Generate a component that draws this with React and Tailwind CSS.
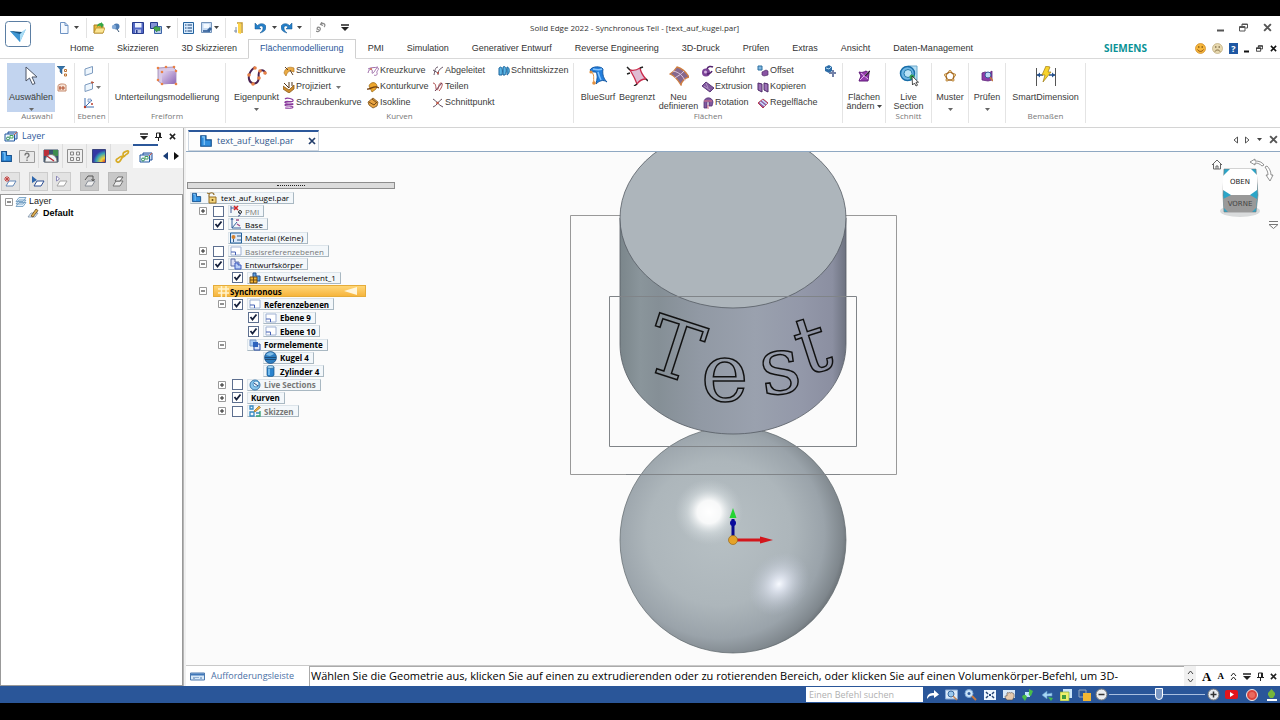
import { useState } from 'react';

const GREY = '#8a8f98';

function Svg({ w = 12, h = 12, vb, children }) {
  return (
    <svg width={w} height={h} viewBox={vb || `0 0 ${w} ${h}`} fill="none" className="shrink-0" aria-hidden="true">
      {children}
    </svg>
  );
}

const Caret = ({ color = '#444' }) => (
  <Svg w={5} h={3}>
    <path d="M0 0h5L2.500 3z" fill={color} />
  </Svg>
);

const Plane = ({ stroke = '#7d9bbf', fill = '#eef6fd', children }) => (
  <Svg>
    <path d="M2 4 9.500 1.500V8L2 10.500z" fill={fill} stroke={stroke} />
    {children}
  </Svg>
);

const LayerPlane = ({ stroke, fill = '#fff', children }) => (
  <Svg w={13} h={13}>
    <path d="m2 11 3-5h7l-3 5z" fill={fill} stroke={stroke} />
    {children}
  </Svg>
);

const Close = ({ size = 7, color = '#222' }) => (
  <Svg w={size} h={size} vb="0 0 8 8">
    <path d="M1 1l6 6M7 1 1 7" stroke={color} strokeWidth="1.700" />
  </Svg>
);

const Restore = ({ size = 8, color = '#333' }) => (
  <Svg w={size} h={size} vb="0 0 9 9">
    <path d="M3 3V1h5.500v4H6.500M.5 3.500h5.500v4.500H.5zM.5 4.500h5.500M3 1.500h5.500" stroke={color} />
  </Svg>
);

const Minus = ({ size = 7, color = '#333' }) => (
  <Svg w={size} h={8}>
    <path d={`M0 6.500h${size}`} stroke={color} strokeWidth="2" />
  </Svg>
);

const MenuDown = () => (
  <Svg w={8} h={7}>
    <path d="M0 1h8" stroke="#222" strokeWidth="1.500" />
    <path d="M0 3h8L4 7z" fill="#222" />
  </Svg>
);

const Pin = () => (
  <Svg w={7} h={9}>
    <path d="M1.500 5V1h4v4M4.500 1v4M0 5.500h7M3.500 6v3" stroke="#222" />
  </Svg>
);

const Layers = ({ size = 14 }) => (
  <Svg w={size} h={12} vb="0 0 14 12">
    <path d="M4 2h9v7H4z" fill="#cfe0f5" stroke="#1f4f9a" />
    <path d="M1 4h9.500v7H1z" fill="#eef6ff" stroke="#23599f" />
    <circle cx="4" cy="8.500" r="1.500" stroke="#2b8a55" />
    <path d="M6 5.500h3v2.500H6z" fill="#fff" stroke="#47a05a" />
    <path d="m10 5 3-3" stroke="#d05a44" />
  </Svg>
);

const Part = ({ size = 12 }) => (
  <Svg w={size} h={size} vb="0 0 12 12">
    <path d="M1.500 1.500H6V5h4.500v5.500h-9z" fill="#2f8ede" stroke="#17528f" />
    <path d="M2.500 2.500h2v7" stroke="#8cc9f7" />
  </Svg>
);

const RefPlane = () => (
  <Svg w={12} h={10}>
    <path d="M1 1h10v8H1z" fill="#fff" stroke="#9fb1d2" />
    <path d="M1 6h4.500v3" stroke="#4560b4" />
  </Svg>
);

const ICONS = {
  logo: (
    <Svg w={26} h={26}>
      <rect x=".5" y=".5" width="25" height="25" rx="3" fill="#fff" stroke="#5b7ea3" />
      <path d="m5 10 10 11 6-13-5 4z" fill="#63b7e6" />
      <path d="m5 10 10 2v9z" fill="#3f95d1" />
      <path d="m15 12 6-4-6 13z" fill="#a9dcf5" />
      <path d="m5 10 10 3 2-2z" fill="#17527f" />
    </Svg>
  ),
  file: (
    <Svg w={10} h={12}>
      <path d="M1.500.5H6L9 3.500v8H1.500z" fill="#f4f9ff" stroke="#6d92c3" />
      <path d="M6 .5v3h3" stroke="#6d92c3" />
    </Svg>
  ),
  open: (
    <Svg>
      <path d="M1 3h4l1 1h4v7H1z" fill="#e6b93f" stroke="#a97e1f" />
      <path d="M1 11 3 6h9l-2 5z" fill="#fbe493" stroke="#b48c25" strokeWidth=".7" />
      <path d="M4 5c0-3 2-4 4-4V0l3 3-3 3V4C6 3.500 5 4 4 5z" fill="#35a644" />
    </Svg>
  ),
  pushpin: (
    <Svg w={9} h={9}>
      <circle cx="5.500" cy="3.500" r="3" fill="#4d7cb4" />
      <circle cx="3" cy="4" r="2.200" fill="#85abd7" />
      <path d="M6 6l2 3" stroke="#34506f" />
    </Svg>
  ),
  save: (
    <Svg>
      <path d="M.5.5h11v11h-11z" fill="#5268c5" stroke="#263b8d" />
      <path d="M3 1h6.500v4.500H3z" fill="#eef4ff" />
      <path d="M3 7.500h6V11H3z" fill="#b8c3e8" />
      <path d="M4 8h1.500v3H4z" fill="#263b8d" />
    </Svg>
  ),
  saveAs: (
    <Svg>
      <path d="M.5.5h7v6h-7z" fill="#8493d6" stroke="#263b8d" />
      <path d="M4.500 4.500h7v7h-7z" fill="#b9cbe8" stroke="#3d64a8" />
      <path d="m3 6 4-2v1.500h3v3H7V10z" fill="#42a84b" stroke="#1c7328" strokeWidth=".5" />
    </Svg>
  ),
  list: (
    <Svg w={11} h={12}>
      <path d="M.5.5h10v11H.5z" fill="#d8ecff" stroke="#24639f" />
      <path d="M2 3h1.500M2 6h1.500M2 9h1.500M4.500 3H9M4.500 6H9M4.500 9H9" stroke="#173f72" />
    </Svg>
  ),
  snapshot: (
    <Svg w={11} h={11}>
      <path d="M.5.5h10v10H.5z" fill="#c8dcf3" stroke="#7594ba" />
      <path d="M2 8h7v2H2z" fill="#4c74a8" />
      <path d="M2.500 2h6v4h-6z" fill="#f3f9ff" />
      <path d="m6 8 3-3 2 2-3 3z" fill="#37659e" />
    </Svg>
  ),
  door: (
    <Svg w={10} h={12}>
      <path d="M4 1h5v10" stroke="#c69b2c" strokeWidth="1.500" />
      <path d="m5 1 3 1v10l-3-1z" fill="#ffd447" />
      <path d="M1 9h3M3 5v6" stroke="#7c8ca5" />
    </Svg>
  ),
  undo: (
    <Svg>
      <path d="M1 1v6h6L5 5c2-2 4-1 4 1s-1 3-3 5c4-1 6-3 6-6S7 0 3.500 3.500z" fill="#2580c9" stroke="#12528d" strokeWidth=".5" />
    </Svg>
  ),
  redo: (
    <Svg>
      <path d="M11 1v6H5l2-2C5 3 3 4 3 6s1 3 3 5C2 10 0 8 0 5s5-5 8.500-1.500z" fill="#2580c9" stroke="#12528d" strokeWidth=".5" />
    </Svg>
  ),
  refresh: (
    <Svg w={11} h={11}>
      <path d="M5 2c3-2 5 1 3 3M6 0 4.500 2.500 7 3.500M1 6c2-2 4 0 3 2S1 10 0 9m2-4-1 2 2 1" stroke="#8b8b8b" strokeWidth="1.200" />
    </Svg>
  ),
  smile: (
    <Svg w={11} h={11}>
      <circle cx="5.500" cy="5.500" r="5" fill="#f6b73c" stroke="#cf8620" strokeWidth=".7" />
      <circle cx="3.800" cy="4" r=".8" fill="#68400a" />
      <circle cx="7.200" cy="4" r=".8" fill="#68400a" />
      <path d="M2.500 6.500c1.500 2.500 4.500 2.500 6 0" stroke="#8b4d10" />
    </Svg>
  ),
  frown: (
    <Svg w={11} h={11}>
      <circle cx="5.500" cy="5.500" r="5" fill="#e7d8af" stroke="#bdaa7a" strokeWidth=".7" />
      <circle cx="3.800" cy="4" r=".8" fill="#68562f" />
      <circle cx="7.200" cy="4" r=".8" fill="#68562f" />
      <path d="M3 8.500c1-2 4-2 5 0" stroke="#806a3c" />
    </Svg>
  ),
  cursor: (
    <Svg w={14} h={20}>
      <path d="M2 1v14l3.500-3 3 6.500 2.500-1-3-6.500h5z" fill="#fff" stroke="#4c5566" />
    </Svg>
  ),
  filter: (
    <Svg w={11} h={11}>
      <path d="M0 0h8L5 3.500V8L3 6V3.500z" fill="#3474ab" stroke="#24507a" strokeWidth=".5" />
      <path d="M7.500 3.500h2v2h-2zM7.500 8h2v2h-2z" fill="#fff" stroke="#bc7331" />
    </Svg>
  ),
  overlap: (
    <Svg w={10} h={9}>
      <path d="M1 2.500C3 0 8 1 9 2v6H1z" fill="#f6e3d7" stroke="#c58a6c" />
      <path d="M2 5h6M3 3v4M6 3v4" stroke="#b04c2b" />
    </Svg>
  ),
  plane: <Plane />,
  planeMenu: (
    <Plane>
      <path d="M9 0v3M8 1.500h3" stroke="#b85c45" />
    </Plane>
  ),
  axes: (
    <Svg>
      <path d="M2 1v9h9M2 10l7-7" stroke="#3d6fb0" />
      <path d="M5 2h3v3H5z" fill="#d8e9fa" stroke="#5a7bb0" strokeWidth=".6" />
      <circle cx="2" cy="10" r="1.200" fill="#b83b2d" />
      <circle cx="9" cy="7" r="1" fill="#b83b2d" />
    </Svg>
  ),
  subdivision: (
    <Svg w={22} h={22}>
      <defs>
        <linearGradient id="cube" x1="0" x2="1" y1="0" y2="1">
          <stop offset="0" stopColor="#e3d3ef" />
          <stop offset="1" stopColor="#8c67b4" />
        </linearGradient>
      </defs>
      <path d="m2 3 15-1 3 3v13l-14 1-4-3z" fill="#d9c9e6" stroke="#8c76a8" strokeWidth=".7" />
      <rect x="6" y="6" width="14" height="13" rx="3" fill="url(#cube)" />
      <g fill="#e98145">
        <circle cx="2" cy="3" r="1.300" /><circle cx="10" cy="2" r="1.300" /><circle cx="18" cy="2" r="1.300" />
        <circle cx="6" cy="7" r="1.300" /><circle cx="20" cy="6" r="1.300" /><circle cx="6" cy="19" r="1.300" />
        <circle cx="20" cy="19" r="1.300" /><circle cx="2" cy="15" r="1.300" />
      </g>
    </Svg>
  ),
  keypoint: (
    <Svg w={20} h={20}>
      <path d="M8 1C4 4 1 8 2 13s7 6 9 2-1-8 2-10 6 1 5 3" stroke="#4a2150" strokeWidth="2" />
      <g fill="#e98145">
        <circle cx="8" cy="2" r="1.800" /><circle cx="2" cy="9" r="1.800" /><circle cx="6" cy="18" r="1.800" />
        <circle cx="12" cy="12" r="1.800" /><circle cx="13" cy="5" r="1.800" /><circle cx="18" cy="7" r="1.800" />
      </g>
    </Svg>
  ),
  cutCurve: (
    <Svg>
      <path d="M1 8c1-5 5-7 10-5v4L8 6c-3 0-4 2-5 5z" fill="#eaaa43" stroke="#b17a29" strokeWidth=".7" />
      <path d="m2 2 3 3M7 5l3 5" stroke="#5d4029" />
    </Svg>
  ),
  project: (
    <Svg>
      <path d="m0 5 6 4 5-5v4l-5 4-6-4z" fill="#cf8e2e" stroke="#8a5a1c" strokeWidth=".8" />
      <path d="m1 2 5 5V1M9 1v4" stroke="#513417" />
    </Svg>
  ),
  helix: (
    <Svg>
      <path d="M2 2c2-2 9 0 8 2s-7-1-8 1 8 0 8 2-8-1-8 1 8 0 8 2-6 1-8 1" stroke="#8a3b9d" strokeWidth="1.200" />
    </Svg>
  ),
  cross: (
    <Svg>
      <path d="M1 8c1-4 3-5 4-3S4 9 6 8s3-6 5-5-2 3-1 5-2 3-3 2M1 4c3-2 7-1 10-2" stroke="#9f6eaa" />
      <circle cx="4" cy="4" r="1" fill="#d06c49" />
    </Svg>
  ),
  contour: (
    <Svg>
      <path d="M2 5c1-4 7-5 8 0l-1 3-4 3z" fill="#eda62c" stroke="#a1701d" strokeWidth=".8" />
      <path d="M0 8c4 1 7-5 12-1" stroke="#6f3d0e" strokeWidth="1.300" />
    </Svg>
  ),
  isocline: (
    <Svg>
      <path d="m1 5 5-4 5 4-1 4-4 2-4-3z" fill="#e9a442" stroke="#79501e" strokeWidth=".8" />
      <path d="m2 5 5 3 3-3M5 2l5 4" stroke="#764a13" />
    </Svg>
  ),
  derived: (
    <Svg>
      <path d="M2 10c1-4 1-8 4-8M6 10c0-5 2-6 5-8M1 5l5 3" stroke="#695768" />
      <circle cx="6" cy="8" r="1" fill="#c04d3b" />
    </Svg>
  ),
  split: (
    <Svg>
      <path d="M1 2c4 0 2 7 4 7s1-7 4-7 0 6-2 8" stroke="#ad4c4c" />
      <path d="m3 10 7-8" stroke="#6b3b55" />
    </Svg>
  ),
  intersect: (
    <Svg>
      <path d="M1 2c4 2 5 6 10 8M1 10c4-1 5-6 9-8" stroke="#66515f" />
      <circle cx="5.500" cy="6" r="1.300" fill="#c25746" />
    </Svg>
  ),
  sketches: (
    <Svg>
      <path d="M1 3c3-3 4 2 3 7H1zM5 2c4-2 4 5 2 8H5zM9 2c3 0 3 7 0 8z" fill="#5ab5e5" stroke="#1c659c" />
    </Svg>
  ),
  bluesurf: (
    <Svg w={20} h={20}>
      <path d="M2 4c2-4 11-4 13-1-1 6 1 10 4 13-4-3-8-1-11 2 1-5 2-8 0-12-3 0-5 0-6-2z" fill="#237edc" stroke="#1459a4" />
      <path d="M5 3c4 1 7 1 9 0M10 6c1 4 2 6 3 8" stroke="#85c5ff" strokeWidth="1.500" />
      <path d="M3 6c4 2 2 6 3 11" stroke="#e2903e" />
      <circle cx="3" cy="6" r="1.600" fill="#e2903e" /><circle cx="6" cy="17" r="1.800" fill="#e2903e" />
    </Svg>
  ),
  bounded: (
    <Svg w={22} h={20}>
      <path d="M4 4c4 1 7 0 10-2 1 5 3 8 6 11-4 0-7 2-9 5-2-6-4-9-7-14z" fill="#dfbcd3" stroke="#c92b4b" strokeWidth="1.300" />
      <path d="m1 1 3 3M17 1l-3 1M22 15l-2-2M8 20l3-2M1 8l3-1" stroke="#222" strokeWidth="1.500" />
    </Svg>
  ),
  redefine: (
    <Svg w={20} h={20}>
      <path d="M1 8c3-2 5-4 7-7 4 1 9 5 12 10-4 1-7 4-8 8C9 14 6 10 1 8z" fill="#86688e" stroke="#cf7e41" strokeWidth="1.300" />
      <path d="M4 5c6 1 10 5 12 10M6 12c2-2 6-3 9-7" stroke="#dac6df" />
    </Svg>
  ),
  guided: (
    <Svg>
      <circle cx="4" cy="7.500" r="4" fill="#7a4296" />
      <circle cx="3.500" cy="7" r="1.500" fill="#d3b0df" />
      <path d="M5 4c1-3 4-3 6-2M5 9c3 0 4-1 5-3" stroke="#53236e" strokeWidth="1.500" />
    </Svg>
  ),
  extrude: (
    <Svg>
      <path d="m0 5 4-4 8 6-4 4z" fill="#81599e" stroke="#5d3a79" />
      <path d="m2 5 6 4M4 2l2 5" stroke="#c5a9d5" strokeWidth=".7" />
    </Svg>
  ),
  rotate: (
    <Svg>
      <path d="M2 11V5c0-5 8-6 9 0l-1 4H7V5c-1-1-2 0-2 1v5z" fill="#81599e" stroke="#553174" strokeWidth=".8" />
      <path d="M2 4h8M6 8v4" stroke="#d87083" />
    </Svg>
  ),
  offset: (
    <Svg>
      <path d="M1 1h4v4H1z" fill="#82b9e1" stroke="#2c6f9f" />
      <path d="m5 7 4-2 2 1v4l-4 1-2-1z" fill="#8953a3" stroke="#502c67" strokeWidth=".7" />
    </Svg>
  ),
  copy: (
    <Svg>
      <path d="m1 2 4 1v8L1 9zM7 2l4 1v8L7 9z" fill="#9b70b5" stroke="#4c2868" />
    </Svg>
  ),
  ruled: (
    <Svg>
      <path d="m1 6 5-4 5 4-5 5z" fill="#8e5da7" stroke="#b9394d" />
      <path d="m3 5 5 4M5 3l5 4" stroke="#cce1fb" strokeWidth="1.500" />
    </Svg>
  ),
  combine: (
    <Svg>
      <path d="m1 2 4-2 3 2v4L5 8 1 6z" fill="#2c6ca7" />
      <path d="M8 5h2v2h2v2h-2v3H8V9H5V7h3z" fill="#7180a7" />
      <path d="m2 3 3 1 2-2" stroke="#b0d8f1" />
    </Svg>
  ),
  modify: (
    <Svg>
      <path d="M1 2c3 1 5 0 7-1l3 2-1 8H1l2-5z" fill="#963baf" stroke="#5f1a78" />
      <path d="m2 10 9-9M3 3l7 6" stroke="#e0b4ec" />
      <path d="m7 6 5-5" stroke="#2c2330" strokeWidth="1.500" />
    </Svg>
  ),
  live: (
    <Svg w={20} h={22}>
      <path d="M9 1h9v14H9z" fill="#b4ddf3" stroke="#6aa9cc" />
      <circle cx="8.500" cy="8.500" r="7" fill="#6fb7e5" stroke="#176da8" strokeWidth="1.500" />
      <circle cx="9" cy="8.500" r="4" fill="#b9e3f7" stroke="#237bad" />
      <circle cx="13" cy="12" r="2.500" fill="#34a354" />
      <path d="m13 11 .5 9 2-2 1.500 3 1.500-.8-1.500-3h2.500z" fill="#fff" stroke="#222" strokeWidth=".8" />
    </Svg>
  ),
  pattern: (
    <Svg>
      <path d="m6 1.500 4.500 3.300-1.700 5.200H3.200L1.500 4.800z" stroke="#a36721" strokeWidth="1.500" />
      <g fill="#f3d48d" stroke="#a36721" strokeWidth=".6">
        <circle cx="6" cy="1.500" r="1.200" /><circle cx="10.500" cy="5" r="1.200" /><circle cx="9" cy="10" r="1.200" />
        <circle cx="3" cy="10" r="1.200" /><circle cx="1.500" cy="5" r="1.200" />
      </g>
    </Svg>
  ),
  inspect: (
    <Svg>
      <path d="m1 3 3-1 4 1 3-2v9L7 11l-6-1z" fill="#8c3ba8" stroke="#5e267a" strokeWidth=".8" />
      <circle cx="7" cy="5" r="3" fill="#bfd8f5" stroke="#365a9b" />
      <path d="m9 7 3 4" stroke="#c6783e" strokeWidth="1.500" />
    </Svg>
  ),
  dimension: (
    <Svg w={22} h={20}>
      <path d="M1.500 2v18M20.500 2v18" stroke="#555" />
      <path d="M2 9h6M14 9h6" stroke="#26518d" strokeWidth="1.300" />
      <path d="m2 9 3-2.500v5zM20 9l-3-2.500v5z" fill="#26518d" />
      <path d="m11 0 4 1-2 5h3l-8 10 2-7H7z" fill="#f8d32c" stroke="#9c7b15" strokeWidth=".7" />
    </Svg>
  ),
  help: (
    <Svg w={16} h={14}>
      <path d="M.5 1.500H6l1 1h8.500v11H.5z" fill="#e9e9e9" stroke="#9b9b9b" />
      <path d="M6 6.500c0-3 4-3 4 0 0 1.500-2 1-2 3M8 10.500V12" stroke="#777" strokeWidth="1.300" />
    </Svg>
  ),
  gauge: (
    <Svg w={16} h={14}>
      <path d="M1 1h14v12H1z" fill="#395574" stroke="#344b64" />
      <path d="M1 1h5v6H1z" fill="#b92e3a" /><path d="M10 1h5v6h-5z" fill="#3e8c50" />
      <path d="M2 13C2 3 14 3 14 13z" fill="#f1f4f7" stroke="#777" />
      <path d="m4 7 7 5" stroke="#b92e3a" strokeWidth="1.500" />
    </Svg>
  ),
  grid4: (
    <Svg w={16} h={14}>
      <path d="M.5.5h15v13H.5z" fill="#f0f0f0" stroke="#8e8e8e" />
      <path d="M3.500 3h3v3h-3zM9.500 3h3v3h-3zM3.500 8.500h3v3h-3zM9.500 8.500h3v3h-3z" stroke="#858585" />
    </Svg>
  ),
  heat: (
    <Svg w={14} h={14}>
      <defs>
        <radialGradient id="heat" cx="1" cy="1" r="1.200">
          <stop offset="0" stopColor="#d32222" /><stop offset=".3" stopColor="#f0d43a" />
          <stop offset=".6" stopColor="#36a2b5" /><stop offset=".8" stopColor="#3538a5" />
        </radialGradient>
      </defs>
      <path d="M.5.5h13v13H.5z" fill="url(#heat)" stroke="#39437e" />
    </Svg>
  ),
  link: (
    <Svg w={15} h={15}>
      <path d="M8 8c-2-2-4 1-6 2s0 4 2 3 2-4 4-5 2-2 4-3 2-4 0-3-4 1-4 3 1 3 2 2" stroke="#d7ab25" strokeWidth="1.700" />
    </Svg>
  ),
  arrowBlue: <Svg w={5} h={8}><path d="M5 0v8L0 4z" fill="#1a3d77" /></Svg>,
  arrowBlack: <Svg w={5} h={8}><path d="M0 0v8l5-4z" fill="#111" /></Svg>,
  layerNew: (
    <LayerPlane stroke="#6488b7">
      <path d="m1 2 4 4M5 2 1 6M3 1v6M0 4h6" stroke="#c44442" />
    </LayerPlane>
  ),
  layerShow: (
    <LayerPlane stroke="#2d4f93">
      <path d="M0 1v7l5-3z" fill="#2e66ac" />
    </LayerPlane>
  ),
  layerHide: (
    <LayerPlane stroke="#a5a5a5">
      <path d="M1.500 1v5l3-2z" fill="#fff" stroke="#8d8ab8" />
    </LayerPlane>
  ),
  layerMove: (
    <LayerPlane stroke={GREY} fill="#eee">
      <path d="m2 5 3-4h5v4M8.500 4l1.500 2 1.500-2" stroke="#555" />
    </LayerPlane>
  ),
  layerDelete: (
    <LayerPlane stroke="#777" fill="#eee">
      <path d="m4 6 3-4h5l-3 4z" fill="#fff" stroke="#666" />
    </LayerPlane>
  ),
  layerStack: (
    <Svg>
      <path d="m1 8 3-4h7L8 8zM1 10.500l3-4h7l-3 4zM1 5.500l3-4h7l-3 4z" fill="#e4f1fb" stroke="#6696bd" strokeWidth=".8" />
    </Svg>
  ),
  layerEdit: (
    <Svg>
      <path d="m1 9 3-4h7l-3 4z" fill="#e4f1fb" stroke="#7e8fa5" strokeWidth=".8" />
      <path d="m4 8 5-7 2 1.500L6 9z" fill="#e1b052" stroke="#604419" strokeWidth=".8" />
    </Svg>
  ),
  lock: (
    <Svg w={11} h={12}>
      <path d="M3 5V3c0-3 5-3 5 0M1 1l3 1" stroke="#967332" strokeWidth="1.200" />
      <path d="M3 5h7v6H3z" fill="#f4d57c" stroke="#936c25" />
      <circle cx="6.500" cy="8" r="1" fill="#694b15" />
    </Svg>
  ),
  pmi: (
    <Svg>
      <path d="M1 1v7M1 3h4M8 7c3 0 3 4 0 4" stroke="#3e5a96" />
      <path d="m4 1 4 4M8 1 4 5" stroke="#d32626" strokeWidth="1.600" />
      <circle cx="10" cy="7" r="1.500" stroke="#333" />
    </Svg>
  ),
  base: (
    <Svg>
      <path d="M2 1v9h9M2 10l5-6M1 2l1-2 1 2" stroke="#36639f" />
      <path d="M6 2h3M7 6l3 2" stroke="#a14f88" strokeWidth="1.300" />
    </Svg>
  ),
  material: (
    <Svg>
      <path d="M.5 1h11v10H.5z" fill="#dceafb" stroke="#22609b" />
      <circle cx="3.500" cy="5" r="2" fill="#d48232" />
      <path d="M3.500 7v3M7 4h4M7 8h4" stroke="#355b82" />
    </Svg>
  ),
  refplane: <RefPlane />,
  body: (
    <Svg>
      <path d="M1 1h4v3h4v4H1z" fill="#dcdff5" stroke="#5c6ea8" />
      <path d="M5 5h3v2h3v4H5z" fill="#b8cef6" stroke="#3d5bc0" />
    </Svg>
  ),
  element: (
    <Svg>
      <path d="M4 1h3v3h4v5H4z" fill="#5c9fdf" stroke="#244f89" />
      <path d="M1 5h7v6H1z" fill="#f2b635" stroke="#704b13" />
      <path d="M4.500 5v6M1 8h7" stroke="#704b13" />
    </Svg>
  ),
  features: (
    <Svg>
      <path d="M1 1h6v6H1z" fill="#a9cbf5" stroke="#7d9bc8" />
      <path d="M5 5h6v6H5z" fill="#dbe6fb" stroke="#2648a4" />
      <path d="M4 3h5v5H4z" fill="#2e62bd" />
    </Svg>
  ),
  ball: (
    <Svg w={13} h={13}>
      <circle cx="6.500" cy="6.500" r="6" fill="#2c7dc0" stroke="#174c82" strokeWidth=".7" />
      <path d="M2 4c2-4 7-3 8-1L6 5z" fill="#7fbde9" />
      <path d="M1 6.500h11M1 8.500h11" stroke="#1b4169" strokeWidth=".8" />
    </Svg>
  ),
  cylinder: (
    <Svg>
      <path d="M2 2v8c0 2 7 2 7 0V2z" fill="#2983ce" stroke="#165386" strokeWidth=".7" />
      <path d="M4 3v7" stroke="#8bcdf6" strokeWidth="1.500" />
      <ellipse cx="5.500" cy="2" rx="3.500" ry="1.500" fill="#a8d8f5" stroke="#165386" strokeWidth=".6" />
    </Svg>
  ),
  liveSmall: (
    <Svg>
      <circle cx="6" cy="6" r="5" fill="#8cc6ec" stroke="#3c79ab" />
      <circle cx="7" cy="5" r="3" fill="#e1f2fc" stroke="#4e97ca" />
      <path d="m5 4 4 3" stroke="#347" />
    </Svg>
  ),
  skizzen: (
    <Svg>
      <path d="M1 1h3v3H1zM1 7h4v4H1zM7 8h4" stroke="#3588c0" strokeWidth="1.300" />
      <path d="m5 6 5-5 1.500 1.500L6 7z" fill="#efb23c" stroke="#8a5b18" strokeWidth=".6" />
      <path d="M7 11h4V6" stroke="#30a070" strokeWidth="1.300" />
    </Svg>
  ),
  promptBar: (
    <Svg w={15} h={9}>
      <path d="M.5 1h14v7H.5z" fill="#d7e8f8" stroke="#4c79ae" />
      <path d="M1 2.500h13" stroke="#3f77b9" strokeWidth="2" />
      <path d="M3 6h2m1-1v1m2-1v1m2 0h2" stroke="#4c79ae" />
    </Svg>
  ),
  go: <Svg><path d="M0 10c0-5 3-6 7-6V1l5 4.500L7 9V6.500C4 6 2 7 0 10z" fill="#fff" /></Svg>,
  zoomArea: (
    <Svg w={13} h={12}>
      <path d="M.5 1h12v9H.5z" fill="#dceaf8" stroke="#87a9d5" />
      <circle cx="6" cy="5" r="3" fill="#9bc8ed" stroke="#39689e" /><path d="m8 7 4 4" stroke="#c78653" strokeWidth="1.500" />
    </Svg>
  ),
  zoom: (
    <Svg w={13} h={12}>
      <circle cx="5" cy="4.500" r="4" fill="#cde5f8" stroke="#7ba6d7" /><circle cx="5" cy="4.500" r="1.500" fill="#315e9f" />
      <path d="m8 7 4 4" stroke="#c97b42" strokeWidth="2" />
    </Svg>
  ),
  fit: (
    <Svg>
      <path d="M0 1h12v10H0z" fill="#eef6ff" />
      <path d="m2 3 2 2M10 3 8 5M2 9l2-2M10 9 8 7" stroke="#234476" strokeWidth="1.500" /><path d="M5 5h2v2H5z" fill="#234476" />
    </Svg>
  ),
  pan: (
    <Svg>
      <path d="M0 1h12v8H0z" fill="#d9e8f8" />
      <path d="M4 11C1 8 2 6 4 7V4c1-1 1.500 0 1.500 0 1-1 2 0 2 0 1-1 2 0 2 0 1 0 2 1 1.500 4l-1.500 3z" fill="#e5c9ae" stroke="#4d4848" strokeWidth=".6" />
    </Svg>
  ),
  orbit: (
    <Svg>
      <path d="M3 3h5v5H3z" fill="#bfe5ff" /><path d="M0 8c1-3 4-3 5 0l-2 4zM7 0l4 2-2 5c-2 0-3-2-2-3z" fill="#48bd49" />
    </Svg>
  ),
  lookAt: (
    <Svg>
      <path d="m1 6 5-4v3l5-1v3H6v3z" fill="#a7d6f5" stroke="#5b94c8" strokeWidth=".6" /><path d="m7 8 5 1-2 3z" fill="#42bb4b" />
    </Svg>
  ),
  views: (
    <Svg>
      <path d="M3 0h9v9H3z" fill="#cde6f9" /><path d="M0 3h9v9H0z" fill="#eef06d" stroke="#80a83a" strokeWidth=".7" />
      <path d="M2 6h4v4H2z" fill="#3f9d3e" />
    </Svg>
  ),
  style: (
    <Svg w={13} h={12}>
      <path d="M1 1h7v7H1z" stroke="#95a7bc" /><path d="M5 4h8v8H5z" fill="#f2b632" />
    </Svg>
  ),
  minusRound: (
    <Svg w={13} h={13}>
      <circle cx="6.500" cy="6.500" r="5.500" fill="#e9ecef" stroke="#777" /><path d="M3.500 6.500h6" stroke="#333" strokeWidth="1.500" />
    </Svg>
  ),
  plusRound: (
    <Svg w={13} h={13}>
      <circle cx="6.500" cy="6.500" r="5.500" fill="#e9ecef" stroke="#777" /><path d="M3.500 6.500h6M6.500 3.500v6" stroke="#333" strokeWidth="1.500" />
    </Svg>
  ),
  video: (
    <Svg w={13} h={9}>
      <rect width="13" height="9" rx="2" fill="#e2141b" /><path d="m5 2 4 2.500L5 7z" fill="#fff" />
    </Svg>
  ),
  record: (
    <Svg>
      <circle cx="6" cy="6" r="5.500" fill="#d9433c" stroke="#eee" /><circle cx="6" cy="6" r="3" fill="#ea6a5f" />
    </Svg>
  ),
  upload: (
    <Svg w={11} h={12}>
      <path d="M1 11h10" stroke="#fff" strokeWidth="2" /><path d="M5.500 0 9 4v2L7 9H4L2 6V4z" fill="#76b53b" />
    </Svg>
  ),
};

function IconButton({ icon, label, className = '' }) {
  return (
    <button type="button" aria-label={label} className={`flex shrink-0 items-center justify-center ${className}`}>
      {ICONS[icon]}
    </button>
  );
}

const Divider = () => <span className="h-5 w-px shrink-0 bg-[#e2e2e2]" />;

function QuickAccess() {
  return (
    <div className="flex w-[472px] shrink-0 items-center">
      <IconButton icon="file" label="Neu" className="w-3" />
      <span className="flex w-3 justify-center"><Caret /></span>
      <span className="w-1" />
      <Divider />
      <IconButton icon="open" label="Öffnen" className="ml-1 w-4" />
      <IconButton icon="pushpin" label="Anheften" className="ml-0.5 w-3" />
      <span className="w-1" />
      <Divider />
      <IconButton icon="save" label="Speichern" className="ml-1 w-4" />
      <IconButton icon="saveAs" label="Speichern unter" className="w-5" />
      <Caret />
      <span className="w-1.5" />
      <Divider />
      <IconButton icon="list" label="Eigenschaften" className="w-5" />
      <IconButton icon="snapshot" label="Bild" className="w-4" />
      <Caret />
      <span className="w-1.5" />
      <Divider />
      <IconButton icon="door" label="Schließen" className="ml-0.5 w-5" />
      <IconButton icon="undo" label="Rückgängig" className="w-6" />
      <Caret />
      <IconButton icon="redo" label="Wiederholen" className="w-5" />
      <Caret />
      <span className="w-2" />
      <Divider />
      <IconButton icon="refresh" label="Aktualisieren" className="w-5" />
      <span className="ml-2.5"><MenuDown /></span>
    </div>
  );
}

const TABS = [
  'Home', 'Skizzieren', '3D Skizzieren', 'Flächenmodellierung', 'PMI', 'Simulation', 'Generativer Entwurf',
  'Reverse Engineering', '3D-Druck', 'Prüfen', 'Extras', 'Ansicht', 'Daten-Management',
];

function Header() {
  const [active, setActive] = useState('Flächenmodellierung');
  return (
    <header className="flex border-b border-[#d9d9d9] bg-white">
      <div className="w-[58px] shrink-0 pl-[5px] pt-[5px]">{ICONS.logo}</div>
      <div className="min-w-0 flex-1">
        <div className="flex h-[23px] items-center">
          <QuickAccess />
          <h1 className="whitespace-nowrap text-[8px] text-[#333]">
            Solid Edge 2022 - Synchronous Teil - [text_auf_kugel.par]
          </h1>
          <div className="ml-auto flex items-center gap-[15px] pr-2">
            <button type="button" aria-label="Minimieren"><Minus color="#555" /></button>
            <button type="button" aria-label="Wiederherstellen"><Restore size={9} color="#555" /></button>
            <button type="button" aria-label="Beenden"><Close size={9} color="#555" /></button>
          </div>
        </div>
        <div className="flex h-[19px] items-end">
          <nav className="-mb-px flex font-['Liberation_Sans',sans-serif] text-[9px] text-[#333]">
            {TABS.map((tab) => (
              <button
                key={tab}
                type="button"
                onClick={() => setActive(tab)}
                className={
                  tab === active
                    ? 'h-5 whitespace-nowrap border border-b-white border-[#d0d0d0] bg-white px-[11px] text-[#2b579a]'
                    : 'h-5 whitespace-nowrap pl-3 pr-[11px]'
                }
              >
                {tab}
              </button>
            ))}
          </nav>
          <div className="ml-auto flex h-full items-center">
            <span className="mr-12 text-[10px] font-bold text-[#0a9296]">SIEMENS</span>
            <div className="flex items-center gap-[6px] pr-[3px]">
              <button type="button" aria-label="Gefällt mir">{ICONS.smile}</button>
              <button type="button" aria-label="Gefällt mir nicht">{ICONS.frown}</button>
              <button type="button" className="h-[11px] w-[9px] bg-[#1e57a3] text-[9px] font-bold leading-[11px] text-white">?</button>
              <span className="flex items-center gap-[7px]">
                <button type="button" aria-label="Fenster minimieren"><Minus size={5} color="#111" /></button>
                <button type="button" aria-label="Fenster wiederherstellen"><Restore size={7} color="#111" /></button>
                <button type="button" aria-label="Fenster schließen"><Close color="#111" /></button>
              </span>
            </div>
          </div>
        </div>
      </div>
    </header>
  );
}

function Group({ label, className, children }) {
  return (
    <section className={`flex shrink-0 flex-col border-r border-[#e4e4e4] ${className}`}>
      <div className="flex h-[49px]">{children}</div>
      <p className="h-[11px] text-center font-['Open_Sans',sans-serif] text-[8px] leading-[8px] text-[#777]">{label}</p>
    </section>
  );
}

function BigButton({ icon, lines, className, caret, inlineCaret, selected }) {
  return (
    <button
      type="button"
      className={`flex h-full shrink-0 flex-col items-center whitespace-nowrap leading-[9px] ${selected ? 'bg-[#c2d4ef]' : ''} ${className}`}
    >
      <span className="flex h-[26px] items-center">{ICONS[icon]}</span>
      <span className="mt-1">{lines[0]}</span>
      {lines[1] && (
        <span className="flex items-center gap-0.5">
          {lines[1]}
          {inlineCaret && <Caret />}
        </span>
      )}
      {caret && <span className="mt-1.5"><Caret color="#666" /></span>}
    </button>
  );
}

function SmallColumn({ items, className = '' }) {
  return (
    <div className={`flex shrink-0 flex-col ${className}`}>
      {items.map(([icon, label, menu]) => (
        <button key={icon} type="button" aria-label={label || icon} className="flex h-4 items-center gap-px whitespace-nowrap">
          {ICONS[icon]}
          {label}
          {menu && <span className={label ? 'ml-1' : ''}><Caret color="#777" /></span>}
        </button>
      ))}
    </div>
  );
}

function Ribbon() {
  return (
    <div className="flex border-b border-[#d4d4d4] bg-white pb-1 pt-1 font-['Liberation_Sans',sans-serif] text-[9px] text-[#3b3b3b]">
      <Group label="Auswahl" className="w-[75px]">
        <BigButton icon="cursor" lines={['Auswählen']} className="ml-[7px] w-12" caret selected />
        <SmallColumn className="ml-0.5" items={[['filter'], ['overlap']]} />
      </Group>
      <Group label="Ebenen" className="w-[34px]">
        <SmallColumn className="ml-2" items={[['plane'], ['planeMenu', '', true], ['axes']]} />
      </Group>
      <Group label="Freiform" className="w-[117px]">
        <BigButton icon="subdivision" lines={['Unterteilungsmodellierung']} className="w-full" />
      </Group>
      <Group label="Kurven" className="w-[348px]">
        <BigButton icon="keypoint" lines={['Eigenpunkt']} className="ml-1 w-[53px]" caret />
        <SmallColumn
          className="w-[84px]"
          items={[['cutCurve', 'Schnittkurve'], ['project', 'Projiziert', true], ['helix', 'Schraubenkurve']]}
        />
        <SmallColumn className="w-[65px]" items={[['cross', 'Kreuzkurve'], ['contour', 'Konturkurve'], ['isocline', 'Isokline']]} />
        <SmallColumn className="w-[66px]" items={[['derived', 'Abgeleitet'], ['split', 'Teilen'], ['intersect', 'Schnittpunkt']]} />
        <SmallColumn items={[['sketches', 'Schnittskizzen']]} />
      </Group>
      <Group label="Flächen" className="w-[269px]">
        <BigButton icon="bluesurf" lines={['BlueSurf']} className="ml-1 w-10" />
        <BigButton icon="bounded" lines={['Begrenzt']} className="w-[38px]" />
        <BigButton icon="redefine" lines={['Neu', 'definieren']} className="w-[45px]" />
        <SmallColumn className="ml-px w-[55px]" items={[['guided', 'Geführt'], ['extrude', 'Extrusion'], ['rotate', 'Rotation']]} />
        <SmallColumn className="w-[67px]" items={[['offset', 'Offset'], ['copy', 'Kopieren'], ['ruled', 'Regelfläche']]} />
        <SmallColumn items={[['combine']]} />
      </Group>
      <Group className="w-[43px]">
        <BigButton icon="modify" lines={['Flächen', 'ändern']} className="w-full" inlineCaret />
      </Group>
      <Group label="Schnitt" className="w-[46px]">
        <BigButton icon="live" lines={['Live', 'Section']} className="w-full" />
      </Group>
      <Group className="w-[37px]">
        <BigButton icon="pattern" lines={['Muster']} className="w-full" caret />
      </Group>
      <Group className="w-[37px]">
        <BigButton icon="inspect" lines={['Prüfen']} className="w-full" caret />
      </Group>
      <Group label="Bemaßen" className="w-[80px]">
        <BigButton icon="dimension" lines={['SmartDimension']} className="w-full" />
      </Group>
    </div>
  );
}

function Expander({ open }) {
  return (
    <Svg w={8} h={8}>
      <path d="M.5.5h7v7h-7z" fill="#fff" stroke="#999" />
      <path d={open ? 'M2 4h4' : 'M2 4h4M4 2v4'} stroke="#222" />
    </Svg>
  );
}

function LayerPanel() {
  return (
    <aside className="flex w-[184px] shrink-0 flex-col border-r border-[#b5b5b5] bg-[#f0f0f0]">
      <div className="flex h-4 items-center gap-1 bg-white pl-1 pr-[7px] text-[9px] text-[#2b579a]">
        <Layers />
        Layer
        <span className="ml-auto flex items-center gap-[7px]">
          <MenuDown />
          <Pin />
          <Close />
        </span>
      </div>
      <div className="flex h-6 items-center">
        <span className="flex w-[15px] shrink-0"><Part size={13} /></span>
        <IconButton icon="help" label="Hilfe" className="h-full w-6 border-r border-[#ddd]" />
        <IconButton icon="gauge" label="Sensoren" className="h-full w-6 border-r border-[#ddd]" />
        <IconButton icon="grid4" label="Familie" className="h-full w-6 border-r border-[#ddd]" />
        <IconButton icon="heat" label="Simulation" className="h-full w-6 border-r border-[#ddd]" />
        <IconButton icon="link" label="Verknüpfung" className="h-full w-[22px]" />
        <button type="button" aria-label="Layer" className="flex h-full w-[25px] items-center justify-center border-t-2 border-[#2b579a] bg-white">
          <Layers />
        </button>
        <div className="flex h-full flex-1 items-center justify-center gap-1.5 bg-white">
          <button type="button" aria-label="Zurück">{ICONS.arrowBlue}</button>
          <button type="button" aria-label="Weiter">{ICONS.arrowBlack}</button>
        </div>
      </div>
      <div className="flex h-[26px] items-center pl-px">
        <IconButton icon="layerNew" label="Neuer Layer" className="size-[19px] border border-[#ccc] bg-[#e3e3e3]" />
        <IconButton icon="layerShow" label="Layer einblenden" className="ml-[9px] size-[19px] border border-[#ccc] bg-[#e3e3e3]" />
        <IconButton icon="layerHide" label="Layer ausblenden" className="ml-1 size-[19px] border border-[#ccc] bg-[#e3e3e3]" />
        <IconButton icon="layerMove" label="Element verschieben" className="ml-[9px] size-[19px] border border-[#bbb] bg-[#c8c8c8]" />
        <IconButton icon="layerDelete" label="Layer löschen" className="ml-[9px] size-[19px] border border-[#bbb] bg-[#c8c8c8]" />
      </div>
      <ul className="flex-1 border border-[#999] bg-white pl-1 pt-px font-['Liberation_Sans',sans-serif] text-[9px] text-[#222]">
        <li>
          <span className="flex h-3 items-center gap-0.5">
            <Expander open />
            {ICONS.layerStack}
            Layer
          </span>
          <ul className="ml-1 pl-[18px]">
            <li className="flex h-3 items-center gap-1 font-bold text-black">
              {ICONS.layerEdit}
              Default
            </li>
          </ul>
        </li>
      </ul>
    </aside>
  );
}

const TREE = [
  { level: 1, exp: '+', check: false, icon: 'pmi', label: 'PMI', dim: true },
  { level: 1, check: true, icon: 'base', label: 'Base' },
  { level: 1, icon: 'material', label: 'Material (Keine)' },
  { level: 1, exp: '+', check: false, icon: 'refplane', label: 'Basisreferenzebenen', dim: true },
  { level: 1, exp: '-', check: true, icon: 'body', label: 'Entwurfskörper' },
  { level: 2, check: true, icon: 'element', label: 'Entwurfselement_1' },
  { level: 0, label: 'Synchronous' },
  { level: 2, exp: '-', check: true, icon: 'refplane', label: 'Referenzebenen', bold: true },
  { level: 3, check: true, icon: 'refplane', label: 'Ebene 9', bold: true },
  { level: 3, check: true, icon: 'refplane', label: 'Ebene 10', bold: true },
  { level: 2, exp: '-', icon: 'features', label: 'Formelemente', bold: true },
  { level: 3, icon: 'ball', label: 'Kugel 4', bold: true },
  { level: 3, icon: 'cylinder', label: 'Zylinder 4', bold: true },
  { level: 2, exp: '+', check: false, icon: 'liveSmall', label: 'Live Sections', bold: true, dim: true },
  { level: 2, exp: '+', check: true, label: 'Kurven', bold: true },
  { level: 2, exp: '+', check: false, icon: 'skizzen', label: 'Skizzen', bold: true, dim: true },
];

const INDENT = { 1: 'pl-[13px]', 2: 'pl-8', 3: 'pl-12' };

function TreeCheck({ label, defaultChecked }) {
  return (
    <span className="relative flex size-[11px]">
      <input
        type="checkbox"
        aria-label={label}
        defaultChecked={defaultChecked}
        className="peer size-[11px] appearance-none border border-[#5d6f8f] bg-white"
      />
      <svg viewBox="0 0 11 11" className="pointer-events-none absolute inset-0 hidden peer-checked:block" fill="none">
        <path d="m2.500 5 2 2.500 4-5" stroke="#16213d" strokeWidth="1.800" />
      </svg>
    </span>
  );
}

function TreeRow({ row }) {
  if (row.level === 0) {
    return (
      <li className="flex items-center pl-[13px]">
        <span className="w-[14px]"><Expander open /></span>
        <span className="flex h-3 w-[153px] items-center gap-px border border-[#e5ac3a] bg-gradient-to-b from-[#ffd675] to-[#f6b53c] pl-1 font-bold text-black">
          <Svg w={11} h={11}>
            <path d="M3.500 0v11M8 0v11M0 3h11M0 7h11" stroke="#fff3cd" strokeWidth="1.500" />
          </Svg>
          {row.label}
          <span className="ml-auto pr-2">
            <Svg w={13} h={8}><path d="M0 4 13 0v8z" fill="#fff6dc" /></Svg>
          </span>
        </span>
      </li>
    );
  }
  return (
    <li className={`flex items-center ${INDENT[row.level]}`}>
      <span className="w-[14px]">{row.exp && <Expander open={row.exp === '-'} />}</span>
      <span className="mr-1 w-[11px]">
        {row.check !== undefined && <TreeCheck label={row.label} defaultChecked={row.check} />}
      </span>
      <span
        className={`flex h-3 items-center gap-[3px] whitespace-nowrap border border-[#dce4ea] border-b-[#a9b8c2] border-r-[#a9b8c2] bg-[#f3f7fa] pr-1 ${row.icon ? '' : 'pl-[3px]'} ${row.bold ? 'font-bold' : ''} ${row.dim ? 'text-[#777]' : 'text-black'}`}
      >
        {row.icon && <span className="flex w-[13px] justify-center">{ICONS[row.icon]}</span>}
        {row.label}
      </span>
    </li>
  );
}

function PathFinder() {
  return (
    <div className="relative w-[209px] pt-[30px]">
      <div className="ml-px flex h-[7px] items-center justify-center border border-[#8d8d8d] bg-[#dcdcdc]">
        <span className="w-7 border-t border-dotted border-[#222]" />
      </div>
      <ul className="mt-0.5 grid h-[227px] auto-rows-fr text-[8px] leading-[11px]">
        <li className="flex items-center pl-1">
          <span className="flex h-3 items-center gap-1 border border-[#dce4ea] border-b-[#a9b8c2] border-r-[#a9b8c2] bg-[#f3f7fa] pr-1 text-black">
            <Part size={11} />
            {ICONS.lock}
            text_auf_kugel.par
          </span>
        </li>
        {TREE.map((row) => (
          <TreeRow key={row.label} row={row} />
        ))}
      </ul>
    </div>
  );
}

function Scene() {
  return (
    <svg
      viewBox="186 152 1094 513"
      preserveAspectRatio="xMidYMin meet"
      className="absolute inset-0 h-full w-full"
      role="img"
      aria-label="Zylinder und Kugel"
    >
      <defs>
        <linearGradient id="side" x1="0" x2="1" y1="0" y2="0">
          <stop offset="0" stopColor="#7b868b" />
          <stop offset=".09" stopColor="#8a959b" />
          <stop offset=".17" stopColor="#858f96" />
          <stop offset=".35" stopColor="#9199a4" />
          <stop offset=".6" stopColor="#9aa1ae" />
          <stop offset=".8" stopColor="#9398a9" />
          <stop offset=".94" stopColor="#8b8fa1" />
          <stop offset="1" stopColor="#6d7280" />
        </linearGradient>
        <radialGradient id="sphere" cx=".44" cy=".47" r=".58">
          <stop offset="0" stopColor="#b7c0c4" />
          <stop offset=".55" stopColor="#adb6bb" />
          <stop offset=".8" stopColor="#9aa3aa" />
          <stop offset=".94" stopColor="#7f878d" />
          <stop offset="1" stopColor="#656b70" />
        </radialGradient>
        <radialGradient id="glow">
          <stop offset="0" stopColor="#fff" />
          <stop offset=".35" stopColor="#fff" stopOpacity=".9" />
          <stop offset=".65" stopColor="#e6ecee" stopOpacity=".4" />
          <stop offset="1" stopColor="#cfd6da" stopOpacity="0" />
        </radialGradient>
        <radialGradient id="glowBlue">
          <stop offset="0" stopColor="#f7faff" />
          <stop offset=".25" stopColor="#e3e8f4" stopOpacity=".8" />
          <stop offset="1" stopColor="#b9c1cf" stopOpacity="0" />
        </radialGradient>
      </defs>
      <path d="M570.500 215.500h326v259h-326z" stroke="#999" fill="none" />
      <circle cx="733" cy="540" r="113" fill="url(#sphere)" stroke="#5f676c" strokeWidth=".7" />
      <ellipse cx="709" cy="512" rx="34" ry="33" fill="url(#glow)" />
      <ellipse cx="779" cy="584" rx="28" ry="34" fill="url(#glowBlue)" transform="rotate(40 779 584)" />
      <path d="M620 218v126c0 50 50 90 113 90s113-40 113-90V218z" fill="url(#side)" stroke="#555c63" strokeWidth=".8" />
      <ellipse cx="733" cy="218" rx="113" ry="90" fill="#adb5bb" stroke="#555c63" strokeWidth=".8" />
      <path d="M609.500 296.500h247v150h-247zM626 474.500h214" stroke="#808488" fill="none" />
      <text
        x="641 701 763 805"
        y="368 401 396 376"
        rotate="18 0 -8 -18"
        fill="none"
        stroke="#111"
        strokeWidth="1.500"
        fontSize="80"
        fontFamily="'DejaVu Serif', serif"
      >
        Test
      </text>
      <path d="M733 540v-21" stroke="#0a0a8c" strokeWidth="3" />
      <circle cx="733" cy="523" r="3" fill="#0a0a9c" />
      <path d="m733 508 3.500 10h-7z" fill="#25d433" />
      <path d="M737 540h26" stroke="#d3161c" strokeWidth="3" />
      <path d="m773 540-13-3.500v7z" fill="#d3161c" />
      <circle cx="733" cy="540" r="4.500" fill="#e5a329" stroke="#98691a" strokeWidth=".7" />
    </svg>
  );
}

function ViewCube() {
  return (
    <div className="absolute right-0 top-1">
      <svg width="70" height="76" viewBox="1210 156 70 76" fill="none" role="img" aria-label="Ansichtswürfel">
        <ellipse cx="1240" cy="211" rx="20" ry="6" fill="#d9dbdc" />
        <path d="M1224 169h32l2 26-2 17h-32l-1-17z" fill="#2ba5c8" stroke="#777" strokeWidth=".6" />
        <path d="M1230 169h21l6 6v15l-7 5h-19l-8-5v-14z" fill="#fff" />
        <path d="M1231 195h19l7 4-1 9-4 4h-24l-4-4-1-9z" fill="#999" />
        <text x="1240" y="184" textAnchor="middle" fontSize="7" fill="#222" fontFamily="'DejaVu Sans', sans-serif">OBEN</text>
        <text x="1240" y="206" textAnchor="middle" fontSize="7" fill="#444" fontFamily="'DejaVu Sans', sans-serif">VORNE</text>
        <path d="m1212 165 5-5 5 5M1213.500 164v5h7v-5M1216 169v-3h2v3" stroke="#666" />
        <path d="m1250 162 5-3v2c4 0 7 1 9 4l-2 1c-2-2-4-3-7-3v2z" fill="#fff" stroke="#777" strokeWidth=".8" />
        <path d="m1267 166-2 1c2 3 3 5 3 8h-2l4 6 3-6h-2c0-4-2-7-4-9z" fill="#fff" stroke="#777" strokeWidth=".8" />
        <path d="M1269 221.500h9M1269 224.500h9l-4.500 4z" stroke="#777" />
      </svg>
    </div>
  );
}

function Document() {
  return (
    <main className="flex min-w-0 flex-1 flex-col pl-0.5">
      <div className="flex h-[23px] items-end justify-between bg-white">
        <div className="ml-0.5 flex h-[21px] w-[131px] items-center gap-1 border border-t-2 border-[#cdd6e0] border-t-[#2b579a] bg-[#fdfdfd] pl-2.5 pr-0.5 text-[9px] text-[#31578c]">
          <Part size={14} />
          <span className="mr-auto">text_auf_kugel.par</span>
          <button type="button" aria-label="Registerkarte schließen"><Close size={8} color="#223d6b" /></button>
        </div>
        <div className="flex h-full items-center gap-[7px] pr-0.5">
          <Svg w={5} h={8}><path d="M4.500 1v6L1 4z" stroke="#555" /></Svg>
          <Svg w={5} h={8}><path d="M.5 1v6L4 4z" stroke="#555" /></Svg>
          <Caret />
          <button type="button" aria-label="Dokument schließen"><Close size={9} color="#555" /></button>
        </div>
      </div>
      <div className="relative flex-1 border-t border-[#8fa8c2] bg-[#fbfbfb]">
        <Scene />
        <PathFinder />
        <ViewCube />
      </div>
      <PromptBar />
    </main>
  );
}

function PromptBar() {
  return (
    <div className="flex h-[21px] items-stretch border-t border-[#c9c9c9] bg-white">
      <div className="flex w-[123px] shrink-0 items-center gap-1.5 pl-1 text-[9px] text-[#4a6fa5]">
        {ICONS.promptBar}
        Aufforderungsleiste
      </div>
      <p className="min-w-0 flex-1 overflow-hidden whitespace-nowrap border-l border-t border-[#aaa] pl-px text-[11px] leading-[17px] text-black">
        Wählen Sie die Geometrie aus, klicken Sie auf einen zu extrudierenden oder zu rotierenden Bereich, oder klicken Sie auf einen Volumenkörper-Befehl, um 3D-
      </p>
      <div className="flex w-3 items-center justify-center bg-[#f0f0f0]">
        <Svg w={7} h={13}><path d="m1 4 2.500-3L6 4M1 9l2.500 3L6 9" stroke="#444" /></Svg>
      </div>
      <div className="flex items-center gap-1.5 pl-1.5 pr-[3px] font-['Liberation_Serif',serif] font-bold text-black">
        <button type="button" aria-label="Schrift vergrößern" className="text-[13px] leading-none">A</button>
        <button type="button" aria-label="Schrift verkleinern" className="text-[9px] leading-none">A</button>
        <Svg w={7} h={9}><path d="m1 4 2.500-3L6 4M1 8l2.500-3L6 8" stroke="#222" /></Svg>
        <MenuDown />
        <Pin />
        <Close />
      </div>
    </div>
  );
}

const VIEW_TOOLS = [
  ['go', 'Ausführen'], ['zoomArea', 'Zoombereich'], ['zoom', 'Zoom'], ['fit', 'Einpassen'], ['pan', 'Verschieben'],
  ['orbit', 'Drehen'], ['lookAt', 'Teilfläche ausrichten'], ['views', 'Ansichten'], ['style', 'Darstellung'],
];

function StatusBar() {
  return (
    <footer className="flex h-[17px] items-center justify-end bg-[#2a5699]">
      <input
        type="text"
        aria-label="Befehl suchen"
        placeholder="Einen Befehl suchen"
        className="h-[15px] w-[117px] bg-white pl-[3px] text-[9px] text-black placeholder:text-[#b0b0b0]"
      />
      {VIEW_TOOLS.map(([icon, label]) => (
        <IconButton key={icon} icon={icon} label={label} className="w-[19px]" />
      ))}
      <IconButton icon="minusRound" label="Verkleinern" className="w-[15px]" />
      <input
        type="range"
        aria-label="Zoomfaktor"
        defaultValue="52"
        className="h-3 w-24 appearance-none bg-transparent [&::-webkit-slider-runnable-track]:h-px [&::-webkit-slider-runnable-track]:bg-[#a9bfe0] [&::-webkit-slider-thumb]:-mt-[6px] [&::-webkit-slider-thumb]:h-3 [&::-webkit-slider-thumb]:w-2 [&::-webkit-slider-thumb]:appearance-none [&::-webkit-slider-thumb]:rounded-b-full [&::-webkit-slider-thumb]:border [&::-webkit-slider-thumb]:border-white [&::-webkit-slider-thumb]:bg-[#7d99c4]"
      />
      <IconButton icon="plusRound" label="Vergrößern" className="w-4" />
      <IconButton icon="video" label="Video" className="w-5" />
      <IconButton icon="record" label="Aufnehmen" className="w-[22px]" />
      <IconButton icon="upload" label="Hochladen" className="w-[17px]" />
    </footer>
  );
}

export default function App() {
  return (
    <div className="flex min-h-screen flex-col overflow-hidden bg-black py-4 pb-[17px] font-['Open_Sans',sans-serif]">
      <Header />
      <Ribbon />
      <div className="flex flex-1 bg-[#f0f0f0]">
        <LayerPanel />
        <Document />
      </div>
      <StatusBar />
    </div>
  );
}
